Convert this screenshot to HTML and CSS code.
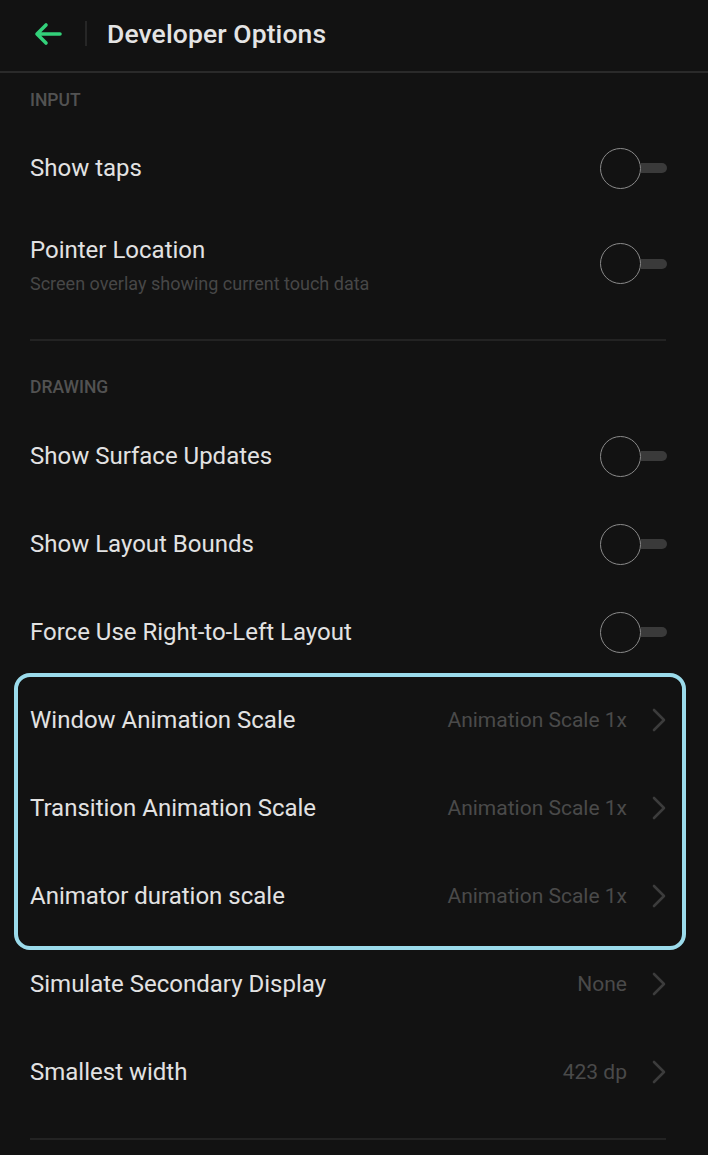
FILE: index.html
```html
<!DOCTYPE html>
<html>
<head>
<meta charset="utf-8">
<link rel="stylesheet" href="styles.css">
</head>
<body>
<header class="topbar">
  <svg class="back" width="30" height="24" viewBox="0 0 30 24"><path d="M27 12H5M13 3L4 12l9 9" fill="none" stroke="#33d17a" stroke-width="3.6" stroke-linecap="round" stroke-linejoin="round"/></svg>
  <span class="vsep"></span>
  <h1 class="title">Developer Options</h1>
</header>
<main class="content">
  <div class="section-label first">INPUT</div>
  <div class="row"><span class="label">Show taps</span><span class="toggle"><span class="knob"></span><span class="track"></span></span></div>
  <div class="row tall">
    <div class="texts"><span class="label">Pointer Location</span><span class="sub">Screen overlay showing current touch data</span></div>
    <span class="toggle"><span class="knob"></span><span class="track"></span></span>
  </div>
  <hr class="divider">
  <div class="section-label">DRAWING</div>
  <div class="row"><span class="label">Show Surface Updates</span><span class="toggle"><span class="knob"></span><span class="track"></span></span></div>
  <div class="row"><span class="label">Show Layout Bounds</span><span class="toggle"><span class="knob"></span><span class="track"></span></span></div>
  <div class="row"><span class="label">Force Use Right-to-Left Layout</span><span class="toggle"><span class="knob"></span><span class="track"></span></span></div>
  <div class="group">
    <div class="highlight"></div>
    <div class="row"><span class="label">Window Animation Scale</span><span class="value">Animation Scale 1x<svg class="chev" width="16" height="26" viewBox="0 0 16 26"><path d="M3 3l10 10-10 10" fill="none" stroke="#3c3c3c" stroke-width="2.6" stroke-linecap="round" stroke-linejoin="round"/></svg></span></div>
    <div class="row"><span class="label">Transition Animation Scale</span><span class="value">Animation Scale 1x<svg class="chev" width="16" height="26" viewBox="0 0 16 26"><path d="M3 3l10 10-10 10" fill="none" stroke="#3c3c3c" stroke-width="2.6" stroke-linecap="round" stroke-linejoin="round"/></svg></span></div>
    <div class="row"><span class="label">Animator duration scale</span><span class="value">Animation Scale 1x<svg class="chev" width="16" height="26" viewBox="0 0 16 26"><path d="M3 3l10 10-10 10" fill="none" stroke="#3c3c3c" stroke-width="2.6" stroke-linecap="round" stroke-linejoin="round"/></svg></span></div>
  </div>
  <div class="row"><span class="label">Simulate Secondary Display</span><span class="value">None<svg class="chev" width="16" height="26" viewBox="0 0 16 26"><path d="M3 3l10 10-10 10" fill="none" stroke="#3c3c3c" stroke-width="2.6" stroke-linecap="round" stroke-linejoin="round"/></svg></span></div>
  <div class="row"><span class="label">Smallest width</span><span class="value">423 dp<svg class="chev" width="16" height="26" viewBox="0 0 16 26"><path d="M3 3l10 10-10 10" fill="none" stroke="#3c3c3c" stroke-width="2.6" stroke-linecap="round" stroke-linejoin="round"/></svg></span></div>
  <hr class="divider bottom">
</main>
</body>
</html>
```
FILE: styles.css
```css
* { box-sizing: border-box; }
html, body { margin: 0; padding: 0; }
body {
  background: #121212;
  font-family: Roboto, "Noto Sans", sans-serif;
  color: #e2e2e2;
  width: 708px;
  height: 1155px;
  overflow: hidden;
}
.topbar {
  height: 73px;
  border-bottom: 2px solid #2a2a2a;
  display: flex;
  align-items: center;
  padding-left: 33px;
  padding-bottom: 4px;
}
.back { display: block; }
.vsep {
  width: 2px;
  height: 25px;
  background: #262626;
  margin-left: 22px;
  margin-right: 20px;
}
.title {
  margin: 0;
  font-size: 26.5px;
  font-weight: 500;
  color: #e4e4e4;
  letter-spacing: 0.1px;
}
.content {
  padding: 0 42px 0 30px;
}
.section-label {
  font-size: 17.5px;
  font-weight: 500;
  color: #525252;
  line-height: 20px;
  margin-top: 36px;
  margin-bottom: 15px;
}
.section-label.first { margin-top: 17px; margin-bottom: 14px; }
.row {
  height: 88px;
  display: flex;
  align-items: center;
  justify-content: space-between;
}
.row.tall {
  height: auto;
  padding-top: 23px;
  padding-bottom: 43px;
  align-items: flex-start;
}
.row.tall .toggle { margin-top: 8px; }
.texts { display: flex; flex-direction: column; }
.label {
  font-size: 24px;
  line-height: 30px;
  color: #e2e2e2;
}
.sub {
  font-size: 18px;
  line-height: 24px;
  color: #474747;
  margin-top: 7px;
}
.toggle {
  display: flex;
  align-items: center;
  margin-right: -1px;
}
.knob {
  width: 41px;
  height: 41px;
  border-radius: 50%;
  border: 1.5px solid #8a8a8a;
}
.track {
  width: 26px;
  height: 10px;
  background: #3a3a3a;
  border-radius: 0 5px 5px 0;
}
.value {
  display: flex;
  align-items: center;
  font-size: 21px;
  color: #4a4a4a;
}
.chev { margin-left: 24px; margin-right: -1px; display: block; }
.divider {
  border: 0;
  height: 2px;
  background: #232323;
  margin: 0;
}
.divider.bottom { margin-top: 22px; }
.group { position: relative; }
.highlight {
  position: absolute;
  left: -16px;
  right: -20px;
  top: -3px;
  bottom: -10px;
  border: 4px solid #9bdbeb;
  border-radius: 16px;
  pointer-events: none;
}
```
